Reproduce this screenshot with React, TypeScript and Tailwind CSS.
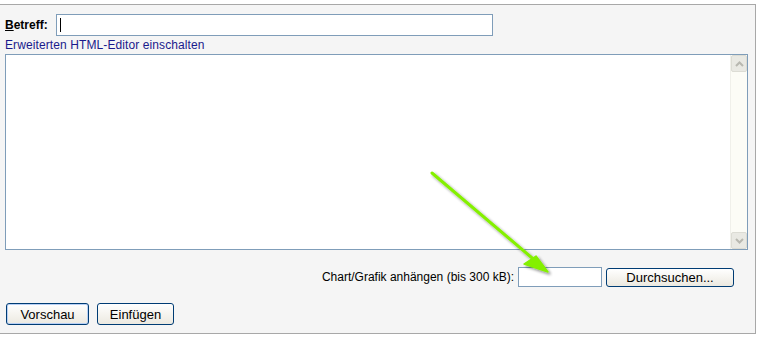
import React from "react";

const btn =
  "h-[19px] rounded-[3px] border border-[#003c74] bg-gradient-to-b from-[#ffffff] to-[#ece9e0] text-[13px] text-black leading-none";

export default function App() {
  return (
    <div className="w-[768px] h-[341px] bg-white relative" style={{ fontFamily: '"Liberation Sans", Arial, sans-serif' }}>
      <div className="mt-[4px] w-[756px] h-[330px] bg-[#f5f5f5] border-t border-r border-b border-[#a8a8a8] pl-[5px] pt-[9px] flex flex-col">
        <div className="flex items-center h-[22px]">
          <span className="text-[12px] font-bold text-black w-[51px]">
            <span className="underline">B</span>etreff:
          </span>
          <div className="w-[437px] h-[22px] bg-white border border-[#7f9db9] flex items-center pl-[3px]">
            <div className="w-px h-[14px] bg-black" />
          </div>
        </div>
        <div className="text-[12px] text-[#1a1a8c] mt-[2px] leading-[14px] tracking-[0.1px]">Erweiterten HTML-Editor einschalten</div>
        <div className="mt-[2px] w-[743px] h-[196px] border border-[#7f9db9] bg-white flex">
          <div className="flex-1" />
          <div className="w-[17px] flex flex-col bg-[#fcfcf6] border-l border-[#f0f0ea]">
            <div className="h-[17px] rounded-[2px] bg-[#e9e9e3] border border-[#dcdcd4] flex items-center justify-center">
              <svg width="9" height="6" viewBox="0 0 9 6"><path d="M1 5 L4.5 1.5 L8 5" stroke="#b8b8b0" strokeWidth="2" fill="none" /></svg>
            </div>
            <div className="flex-1" />
            <div className="h-[17px] rounded-[2px] bg-[#e9e9e3] border border-[#dcdcd4] flex items-center justify-center">
              <svg width="9" height="6" viewBox="0 0 9 6"><path d="M1 1 L4.5 4.5 L8 1" stroke="#b8b8b0" strokeWidth="2" fill="none" /></svg>
            </div>
          </div>
        </div>
        <div className="mt-[17px] flex items-center justify-end w-[729px] h-[20px]">
          <span className="text-[12px] text-black mr-[4px]">Chart/Grafik anhängen (bis 300 kB):</span>
          <div className="w-[84px] h-[20px] bg-white border border-[#7f9db9]" />
          <button className={`${btn} ml-[4px] w-[128px]`}>Durchsuchen...</button>
        </div>
        <div className="mt-[16px] flex items-center gap-[8px] pl-[1px]">
          <button className={`${btn} w-[83px] h-[22px] shadow-[inset_0_0_0_1px_#b8d0f5]`}>Vorschau</button>
          <button className={`${btn} w-[77px] h-[22px]`}>Einfügen</button>
        </div>
      </div>
      <svg className="absolute left-0 top-0 pointer-events-none" width="768" height="341">
        <defs>
          <filter id="sh" x="-20%" y="-20%" width="140%" height="140%">
            <feGaussianBlur in="SourceAlpha" stdDeviation="1.5" />
            <feOffset dx="2" dy="2" />
            <feComponentTransfer><feFuncA type="linear" slope="0.45" /></feComponentTransfer>
            <feMerge><feMergeNode /><feMergeNode in="SourceGraphic" /></feMerge>
          </filter>
        </defs>
        <g filter="url(#sh)">
          <line x1="432" y1="169" x2="538" y2="259" stroke="#84f000" strokeWidth="3" strokeLinecap="round" />
          <path d="M548 268 L524 260 L536 252 Z" fill="#84f000" stroke="#84f000" strokeWidth="1.5" strokeLinejoin="round" />
        </g>
      </svg>
    </div>
  );
}
